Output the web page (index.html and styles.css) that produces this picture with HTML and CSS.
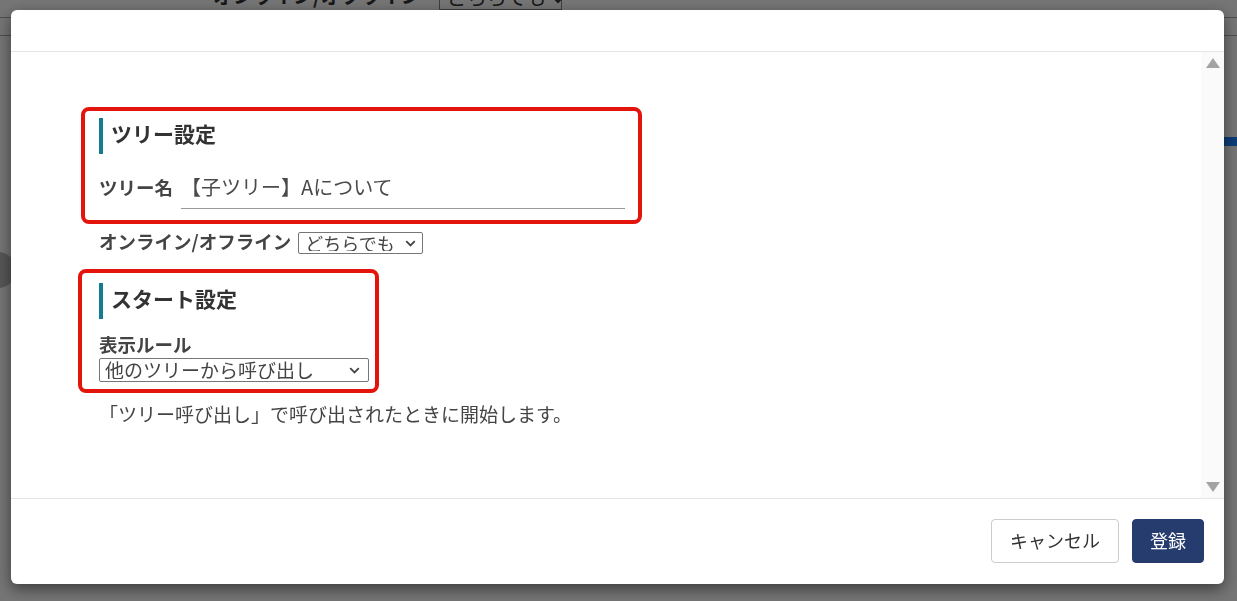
FILE: index.html
```html
<!DOCTYPE html>
<html lang="ja">
<head>
    <meta charset="UTF-8">
    <meta name="viewport" content="width=device-width, initial-scale=1.0">
    <title>ツリー設定</title>
    <link rel="stylesheet" href="styles.css">
</head>
<body>
    <!-- 一覧画面（モーダルの背面） -->
    <div class="page">
        <div class="page-filter">
            <span class="page-filter-label">オンライン/オフライン</span>
            <span class="page-filter-select">どちらでも<svg class="chevron" width="12" height="8" viewBox="0 0 12 8"><path d="M1.5 1.5 L6 6 L10.5 1.5" fill="none" stroke="#333" stroke-width="2"/></svg></span>
        </div>
        <div class="page-line first"></div>
        <div class="page-line"></div>
        <div class="page-tab"></div>
        <div class="page-handle"></div>
    </div>
    <div class="overlay"></div>

    <div class="modal">
        <div class="modal-header"></div>

        <div class="modal-body">
            <div class="modal-scroll">
                <div class="highlight highlight-tree">
                    <h2 class="section-title">ツリー設定</h2>
                    <div class="field-row">
                        <label class="field-label" for="treeName">ツリー名</label>
                        <input type="text" id="treeName" class="field-input" value="【子ツリー】Aについて">
                    </div>
                </div>

                <div class="inline-row">
                    <span class="field-label">オンライン/オフライン</span>
                    <span class="select-wrap select-small">
                        <select>
                            <option>どちらでも</option>
                            <option>オンライン</option>
                            <option>オフライン</option>
                        </select>
                        <svg class="chevron" width="11" height="7" viewBox="0 0 11 7"><path d="M1.2 1.2 L5.5 5.5 L9.8 1.2" fill="none" stroke="#444" stroke-width="1.8"/></svg>
                    </span>
                </div>

                <div class="highlight highlight-start">
                    <h2 class="section-title">スタート設定</h2>
                    <div class="field-label block-label">表示ルール</div>
                    <span class="select-wrap select-wide">
                        <select>
                            <option>他のツリーから呼び出し</option>
                            <option>常に表示</option>
                        </select>
                        <svg class="chevron" width="11" height="7" viewBox="0 0 11 7"><path d="M1.2 1.2 L5.5 5.5 L9.8 1.2" fill="none" stroke="#444" stroke-width="1.8"/></svg>
                    </span>
                </div>

                <p class="help-text">「ツリー呼び出し」で呼び出されたときに開始します。</p>
            </div>

            <div class="scroll-track">
                <span class="arrow arrow-up"></span>
                <span class="arrow arrow-down"></span>
            </div>
        </div>

        <div class="modal-footer">
            <button class="btn btn-cancel">キャンセル</button>
            <button class="btn btn-primary">登録</button>
        </div>
    </div>
</body>
</html>
```

FILE: styles.css
```css
:root {
    --text-color: #333;
    --label-color: #444;
    --accent-color: #137d8f;
    --mark-color: #e2140c;
    --primary-color: #263c6e;
    --border-color: #e5e5e5;
}

* {
    margin: 0;
    padding: 0;
    box-sizing: border-box;
}

body {
    font-family: "Noto Sans CJK JP", "Noto Sans", sans-serif;
    color: var(--text-color);
    background-color: #fff;
    width: 1237px;
    height: 601px;
    overflow: hidden;
}

/* 背面の画面 */
.page {
    position: relative;
    display: flow-root;
    height: 100%;
}

.page-filter {
    display: flex;
    align-items: flex-end;
    gap: 18px;
    margin-left: 213px;
    margin-top: -14px;
    height: 24px;
    font-size: 20px;
    line-height: 24px;
    font-weight: bold;
}

.page-filter-label {
    margin-bottom: 2px;
}

.page-filter-select {
    display: block;
    height: 24px;
    width: 123px;
    padding-left: 7px;
    border: 1px solid #888;
    font-weight: normal;
    line-height: 20px;
    white-space: nowrap;
}

.page-filter-select .chevron {
    margin-left: 6px;
    vertical-align: middle;
}

.page-line {
    height: 18px;
    border-bottom: 1px solid #aaa;
}

.page-line.first {
    height: 8px;
}

.page-tab {
    position: absolute;
    right: 0;
    top: 137px;
    width: 14px;
    height: 9px;
    background-color: #1b84ff;
}

.page-handle {
    position: absolute;
    left: -20px;
    top: 252px;
    width: 36px;
    height: 36px;
    border-radius: 50%;
    background-color: #bcbcbc;
}

.overlay {
    position: fixed;
    inset: 0;
    background-color: rgba(0, 0, 0, 0.54);
}

/* モーダル */
.modal {
    position: fixed;
    left: 11px;
    top: 10px;
    width: 1213px;
    height: 574px;
    background-color: #fff;
    border-radius: 6px;
    box-shadow: 0 5px 15px rgba(0, 0, 0, 0.5);
    display: flex;
    flex-direction: column;
    overflow: hidden;
}

.modal-header {
    height: 42px;
    border-bottom: 1px solid var(--border-color);
}

.modal-body {
    flex: 1;
    display: flex;
    min-height: 0;
}

.modal-scroll {
    flex: 1;
    padding: 55px 0 0 88px;
}

.scroll-track {
    width: 23px;
    background-color: #fafafa;
    display: flex;
    flex-direction: column;
    justify-content: space-between;
    align-items: center;
    padding: 6px 0;
}

.arrow {
    width: 0;
    height: 0;
    border-left: 7.5px solid transparent;
    border-right: 7.5px solid transparent;
}

.arrow-up {
    border-bottom: 10px solid #a3a3a3;
}

.arrow-down {
    border-top: 10px solid #a3a3a3;
}

.modal-footer {
    height: 86px;
    border-top: 1px solid var(--border-color);
    padding: 20px 20px 0;
    display: flex;
    justify-content: flex-end;
    align-items: flex-start;
    gap: 13px;
}

/* 注目枠 */
.highlight {
    border: 4px solid var(--mark-color);
    border-radius: 8px;
}

.highlight-tree {
    width: 561px;
    margin-left: -18px;
    padding: 7px 13px 11px 14px;
}

.highlight-start {
    width: 301px;
    margin-left: -21px;
    margin-top: 15px;
    padding: 10px 6px 7px 17px;
}

.section-title {
    border-left: 4px solid var(--accent-color);
    padding: 0 0 6px 8px;
    font-size: 21px;
    line-height: 30px;
    height: 36px;
    font-weight: bold;
    color: var(--text-color);
}

.field-label {
    font-size: 18.5px;
    line-height: 22px;
    font-weight: bold;
    color: var(--label-color);
    white-space: nowrap;
}

.field-row {
    display: flex;
    align-items: center;
    gap: 8px;
    margin-top: 16px;
}

.field-row .field-label {
    margin-bottom: 6px;
}

.field-input {
    flex: 1;
    height: 39px;
    border: none;
    border-bottom: 1px solid #999;
    font-family: inherit;
    font-size: 20px;
    color: #4a4a4a;
    padding: 0 0 6px;
    outline: none;
}

.inline-row {
    display: flex;
    align-items: center;
    gap: 7px;
    margin-top: 8px;
    height: 22px;
}

.inline-row .field-label {
    margin-top: -4px;
}

/* セレクト */
.select-wrap {
    position: relative;
    display: inline-block;
}

.select-wrap select {
    appearance: none;
    -webkit-appearance: none;
    display: block;
    width: 100%;
    height: 100%;
    font-family: inherit;
    color: var(--label-color);
    background-color: #fff;
    border: 1px solid #767676;
    border-radius: 2px;
    outline: none;
}

.select-wrap .chevron {
    position: absolute;
    top: 50%;
    right: 7px;
    margin-top: -3px;
    pointer-events: none;
}

.select-small {
    width: 125px;
    height: 22px;
}

.select-small select {
    font-size: 18px;
    line-height: 20px;
    padding: 0 0 2px 6px;
}

.block-label {
    margin-top: 14px;
}

.select-wide {
    display: block;
    width: 270px;
    height: 24px;
    margin-top: 3px;
}

.select-wide .chevron {
    right: 9px;
}

.select-wide select {
    font-size: 19px;
    line-height: 22px;
    padding: 0 0 2px 5px;
}

.help-text {
    margin-top: 10px;
    font-size: 19px;
    line-height: 22px;
    color: var(--label-color);
}

/* ボタン */
.btn {
    height: 44px;
    padding: 0 18px 3px;
    border-radius: 4px;
    font-family: inherit;
    font-size: 18px;
    cursor: pointer;
}

.btn-cancel {
    background-color: #fff;
    border: 1px solid #ccc;
    color: var(--text-color);
}

.btn-primary {
    padding: 0 17px 3px;
    background-color: var(--primary-color);
    border: 1px solid var(--primary-color);
    color: #fff;
}
```
